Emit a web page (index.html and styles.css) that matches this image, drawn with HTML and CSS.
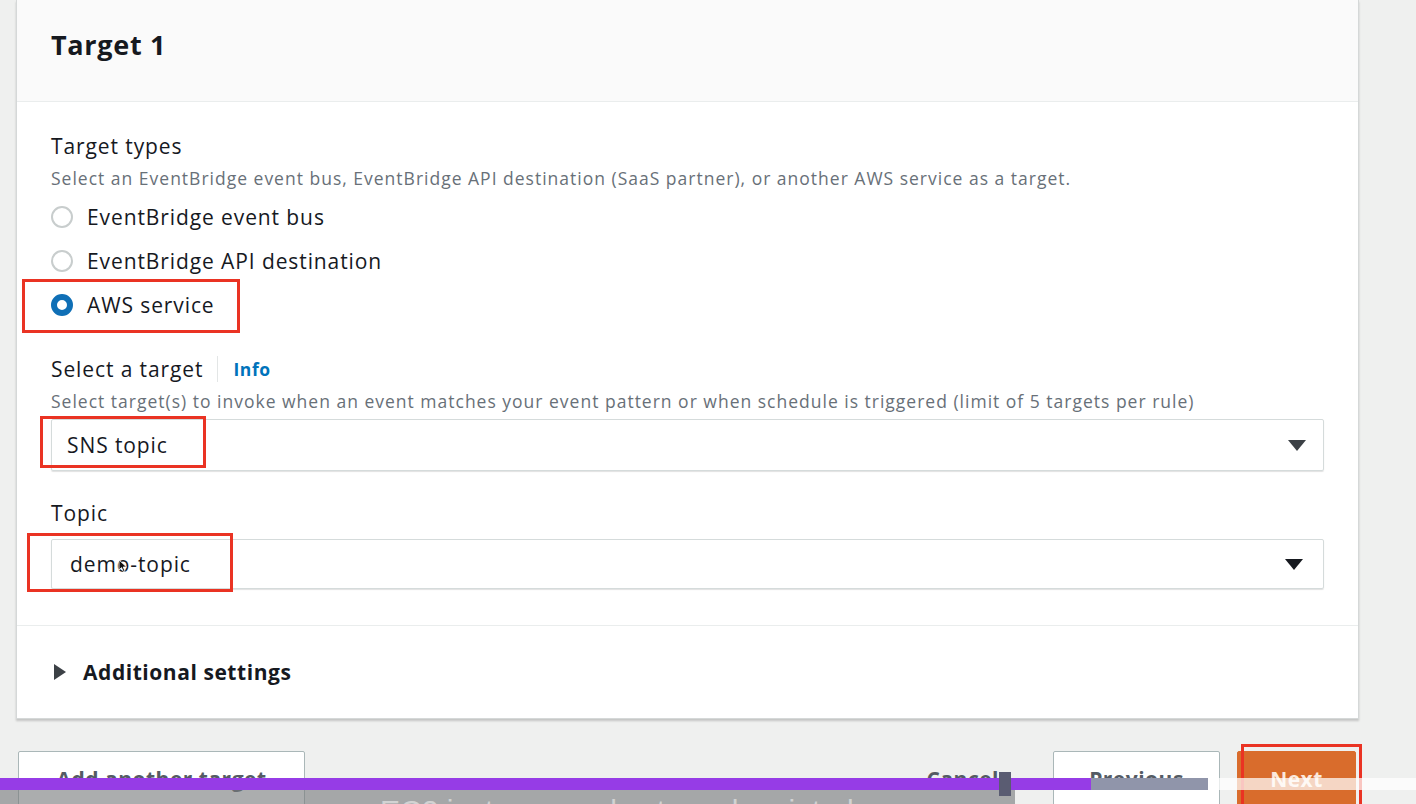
FILE: index.html
```html
<!DOCTYPE html>
<html>
<head>
<meta charset="utf-8">
<link rel="stylesheet" href="styles.css">
</head>
<body>
<div class="page">
  <section class="card">
    <header class="card-head">
      <h2 class="card-title">Target 1</h2>
    </header>
    <div class="card-body">
      <div class="field">
        <div class="label">Target types</div>
        <div class="desc">Select an EventBridge event bus, EventBridge API destination (SaaS partner), or another AWS service as a target.</div>
        <div class="radios">
          <div class="radio"><span class="dot"></span><span>EventBridge event bus</span></div>
          <div class="radio"><span class="dot"></span><span>EventBridge API destination</span></div>
          <div class="radio checked"><span class="dot"></span><span>AWS service</span><span class="mark mark-aws"></span></div>
        </div>
      </div>
      <div class="field">
        <div class="label">Select a target <span class="sep"></span><span class="info">Info</span></div>
        <div class="desc">Select target(s) to invoke when an event matches your event pattern or when schedule is triggered (limit of 5 targets per rule)</div>
        <div class="select sel-sns"><span>SNS topic</span><span class="caret"></span><span class="mark mark-sns"></span></div>
      </div>
      <div class="field">
        <div class="label">Topic</div>
        <div class="select sel-topic"><span>demo-topic</span><span class="caret"></span><span class="mark mark-topic"></span>
          <svg class="cursor" width="10" height="14" viewBox="0 0 10 14"><path d="M1 1 L1 11 L3.5 8.6 L5.4 12.8 L7 12 L5.2 8 L8.6 8 Z" fill="#111" stroke="#fff" stroke-width="0.8"/></svg>
        </div>
      </div>
    </div>
    <div class="card-foot">
      <span class="tri"></span><span class="foot-title">Additional settings</span>
    </div>
  </section>
  <div class="actions">
    <button class="btn add">Add another target</button>
    <div class="spacer"></div>
    <button class="btn link">Cancel</button>
    <button class="btn prev">Previous</button>
    <button class="btn primary">Next<span class="mark mark-next"></span></button>
  </div>
</div>
<div class="player">
  <div class="subtitle"><span>EC2 instance and extra subscripted</span></div>
  <div class="progress">
    <div class="played"></div>
    <div class="buffered"></div>
    <div class="rest"></div>
    <div class="handle"></div>
  </div>
</div>
</body>
</html>
```
FILE: styles.css
```css
* { box-sizing: border-box; }
html, body { margin: 0; padding: 0; }
body {
  width: 1416px;
  height: 804px;
  overflow: hidden;
  background: #eff0ef;
  font-family: "Open Sans", "DejaVu Sans", sans-serif;
  color: #16191f;
  position: relative;
}
.page { padding: 0 57px 0 16px; }
.card {
  background: #fff;
  border: 1px solid #d5d8d8;
  border-top: none;
  box-shadow: 0 2px 2px rgba(0,0,0,0.18);
}
.card-head {
  background: #fafafa;
  height: 102px;
  border-bottom: 1px solid #eaeded;
  padding: 25px 0 0 34px;
}
.card-title {
  margin: 0;
  font-size: 27px;
  font-weight: 700;
  line-height: 40px;
  letter-spacing: 0.7px;
}
.card-body { padding: 30px 34px 36px 34px; }
.field { margin-bottom: 28px; }
.field:last-child { margin-bottom: 0; }
.label {
  font-size: 21px;
  line-height: 28px;
  display: flex;
  align-items: center;
  letter-spacing: 0.9px;
}
.sep { width: 1px; height: 26px; background: #e3e6e6; margin: 0 15px 0 14px; }
.info { color: #0073bb; font-weight: 700; font-size: 17.5px; letter-spacing: 0.6px; }
.desc {
  font-size: 17.5px;
  line-height: 26px;
  color: #687078;
  letter-spacing: 1px;
  margin-top: 5px;
  margin-bottom: 4px;
  white-space: nowrap;
}
.radios { display: flex; flex-direction: column; }
.radio {
  position: relative;
  display: flex;
  align-items: center;
  height: 44px;
  font-size: 21px;
  letter-spacing: 0.9px;
  gap: 14px;
}
.dot {
  width: 22px; height: 22px;
  border-radius: 50%;
  border: 2px solid #c8cdcd;
  background: #fff;
  flex: none;
}
.radio.checked .dot { border: 6px solid #0f6fb6; }
.mark {
  position: absolute;
  border: 3px solid #ea3323;
  pointer-events: none;
}
.mark-aws { left: -29px; top: -4px; width: 218px; height: 54px; }
.select {
  position: relative;
  height: 52px;
  border: 1px solid #d5dbdb;
  border-radius: 2px;
  box-shadow: 0 1px 1px rgba(0,0,0,0.12);
  display: flex;
  align-items: center;
  padding: 0 15px;
  font-size: 21px;
  letter-spacing: 0.9px;
}
.select .caret {
  margin-left: auto;
  width: 0; height: 0;
  border-left: 9px solid transparent;
  border-right: 9px solid transparent;
  border-top: 11px solid #3c4146;
  margin-right: 2px;
}
.sel-sns { margin-top: 5px; }
.sel-topic { height: 50px; padding-left: 18px; margin-top: 12px; }
.sel-topic .caret { border-top-color: #16191f; margin-right: 5px; }
.mark-sns { left: -12px; top: -4px; width: 166px; height: 52px; }
.mark-topic { left: -25px; top: -7px; width: 206px; height: 59px; }
.cursor { position: absolute; left: 66px; top: 19px; }
.card-foot {
  border-top: 1px solid #eaeded;
  height: 93px;
  display: flex;
  align-items: center;
  padding-left: 37px;
  gap: 17px;
}
.tri {
  width: 0; height: 0;
  border-top: 8px solid transparent;
  border-bottom: 8px solid transparent;
  border-left: 12px solid #3c4146;
}
.foot-title { font-size: 21px; font-weight: 700; letter-spacing: 0.55px; }
.actions {
  display: flex;
  align-items: flex-start;
  padding: 32px 3px 0 2px;
}
.spacer { flex: 1; }
.btn {
  position: relative;
  font-family: inherit;
  font-size: 21px;
  font-weight: 700;
  color: #545b64;
  background: #fff;
  border: 1px solid #aab7b8;
  border-radius: 2px;
  height: 56px;
  padding: 0;
  letter-spacing: 0.5px;
}
.btn.add { width: 287px; }
.btn.link { background: transparent; border-color: transparent; padding: 0 20px; margin-right: 33px; }
.btn.prev { width: 167px; }
.btn.primary {
  background: #d96c2c;
  border-color: #d96c2c;
  color: #fbe8dc;
  margin-left: 17px;
  width: 119px;
}
.mark-next { left: 3px; top: -8px; width: 121px; height: 70px; }
.player {
  position: absolute;
  left: 0; right: 0; bottom: 0;
  height: 26px;
}
.subtitle {
  position: absolute;
  left: 0; top: 12px; width: 1015px; height: 14px;
  background: rgba(120,122,124,0.62);
  overflow: hidden;
}
.subtitle span {
  position: absolute;
  left: 380px; top: 6px;
  font-family: "Liberation Sans", sans-serif;
  font-size: 30px;
  line-height: 30px;
  color: rgba(255,255,255,0.5);
  white-space: nowrap;
}
.progress {
  position: absolute;
  left: 0; right: 0; top: 0; height: 12px;
  display: flex;
}
.played { width: 1091px; background: #963ce6; }
.buffered { width: 117px; background: #9095aa; }
.rest { flex: 1; background: rgba(255,255,255,0.72); }
.handle {
  position: absolute;
  left: 999px; top: -6px;
  width: 12px; height: 24px;
  background: #5a5c72;
}
```
